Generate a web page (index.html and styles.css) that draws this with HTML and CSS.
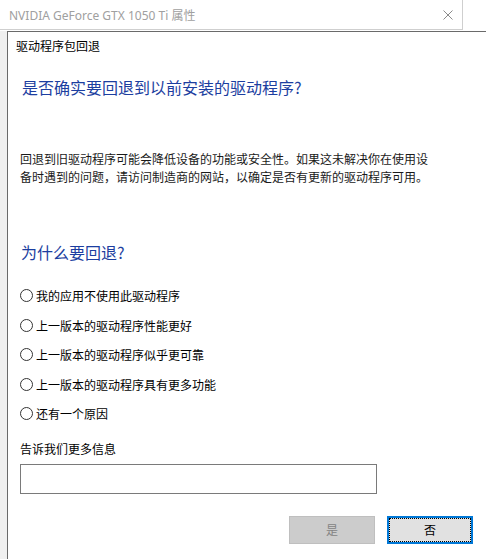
FILE: index.html
```html
<!DOCTYPE html>
<html lang="zh-CN">
<head>
    <meta charset="UTF-8">
    <title>NVIDIA GeForce GTX 1050 Ti 属性</title>
    <link rel="stylesheet" href="styles.css">
</head>
<body>
    <div class="titlebar">
        <div class="titlebar-main">
            <span class="title">NVIDIA GeForce GTX 1050 Ti 属性</span>
            <svg class="close" width="10" height="10" viewBox="0 0 10 10">
                <path d="M0.5 0.5 L9.5 9.5 M9.5 0.5 L0.5 9.5" stroke="#8a8a8a" stroke-width="1" fill="none"/>
            </svg>
        </div>
    </div>
    <div class="backdrop">
        <div class="dialog">
            <div class="caption">驱动程序包回退</div>
            <h2 class="instruction first">是否确实要回退到以前安装的驱动程序?</h2>
            <p class="info">回退到旧驱动程序可能会降低设备的功能或安全性。如果这未解决你在使用设备时遇到的问题，请访问制造商的网站，以确定是否有更新的驱动程序可用。</p>
            <h2 class="instruction">为什么要回退?</h2>
            <div class="options">
                <label class="option"><span class="radio"></span>我的应用不使用此驱动程序</label>
                <label class="option"><span class="radio"></span>上一版本的驱动程序性能更好</label>
                <label class="option"><span class="radio"></span>上一版本的驱动程序似乎更可靠</label>
                <label class="option"><span class="radio"></span>上一版本的驱动程序具有更多功能</label>
                <label class="option"><span class="radio"></span>还有一个原因</label>
            </div>
            <div class="more-label">告诉我们更多信息</div>
            <div class="textbox"></div>
            <div class="buttons">
                <button class="btn disabled">是</button>
                <button class="btn focused">否</button>
            </div>
        </div>
    </div>
</body>
</html>
```

FILE: styles.css
```css
html, body {
    margin: 0;
    padding: 0;
    height: 100%;
    overflow: hidden;
}
body {
    font-family: "Segoe UI", "Noto Sans", "Noto Sans CJK SC", sans-serif;
    font-size: 12px;
    color: #000;
    background-color: #fff;
}
.titlebar {
    height: 31px;
    display: flex;
}
.titlebar-main {
    width: 463px;
    height: 30px;
    border-right: 1px solid #cfcfcf;
    border-bottom: 1px solid #cfcfcf;
    display: flex;
    align-items: center;
    justify-content: space-between;
    padding: 0 9px 0 9px;
    box-sizing: border-box;
}
.title {
    color: #a0a0a0;
    font-size: 12px;
}
.close {
    margin-top: 0;
}
.backdrop {
    background-color: #f0f0f0;
    padding-left: 7px;
    height: 528px;
}
.dialog {
    background-color: #fff;
    border-left: 1px solid #6a6a6a;
    border-top: 1px solid #6a6a6a;
    height: 100%;
    padding: 6px 13px 0 12px;
    box-sizing: border-box;
    font-family: "Noto Sans CJK SC", "Noto Sans", sans-serif;
}
.caption {
    line-height: 16px;
    margin-left: -4px;
}
.instruction {
    margin: 55px 0 0 1px;
    font-size: 16px;
    line-height: 22px;
    font-weight: normal;
    color: #1c3ea0;
}
.instruction.first {
    margin-top: 22px;
    margin-left: 2px;
}
.info {
    margin: 52px 0 0 0;
    width: 412px;
    line-height: 18px;
    color: #1a1a1a;
}
.options {
    margin-top: 18px;
    display: flex;
    flex-direction: column;
}
.option {
    height: 29.5px;
    display: flex;
    align-items: center;
    gap: 3px;
}
.radio {
    width: 11px;
    height: 11px;
    border: 1px solid #333;
    border-radius: 50%;
    background-color: #fff;
}
.more-label {
    margin-top: 12px;
    line-height: 16px;
}
.textbox {
    margin-top: 7px;
    width: 357px;
    height: 30px;
    border: 1px solid #7a7a7a;
    box-sizing: border-box;
}
.buttons {
    margin-top: 22px;
    display: flex;
    justify-content: flex-end;
    gap: 12px;
}
.btn {
    width: 86px;
    height: 28px;
    font-family: "Noto Sans CJK SC", sans-serif;
    font-size: 12px;
    padding: 0;
    box-sizing: border-box;
}
.btn.disabled {
    background-color: #cccccc;
    border: 1px solid #bfbfbf;
    color: #838383;
}
.btn.focused {
    background-color: #e1e1e1;
    border: 2px solid #0078d7;
    color: #000;
    outline: 1px dotted #000;
    outline-offset: -3px;
}
```
